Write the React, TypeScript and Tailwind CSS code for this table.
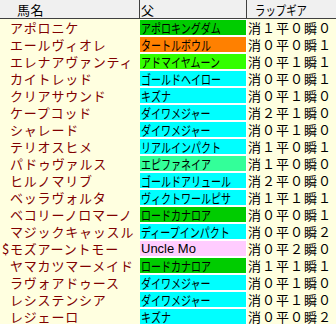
import React from "react";

type Row = { name: string; mark?: string; sire: string; color: string; gear: string; latin?: boolean };

const G1 = "bg-[#00cc00]";
const G2 = "bg-[#33ff00]";
const OR = "bg-[#ff8000]";
const CY = "bg-[#00ffff]";
const MT = "bg-[#33ff99]";
const PK = "bg-[#ffccff]";

const rows: Row[] = [
  { name: "アポロニケ", sire: "アポロキングダム", color: G1, gear: "消１平０瞬０" },
  { name: "エールヴィオレ", sire: "タートルボウル", color: OR, gear: "消０平０瞬１" },
  { name: "エレナアヴァンティ", sire: "アドマイヤムーン", color: G2, gear: "消０平１瞬１" },
  { name: "カイトレッド", sire: "ゴールドヘイロー", color: CY, gear: "消０平０瞬１" },
  { name: "クリアサウンド", sire: "キズナ", color: CY, gear: "消０平１瞬０" },
  { name: "ケープコッド", sire: "ダイワメジャー", color: CY, gear: "消２平１瞬０" },
  { name: "シャレード", sire: "ダイワメジャー", color: CY, gear: "消０平１瞬０" },
  { name: "テリオスヒメ", sire: "リアルインパクト", color: CY, gear: "消１平０瞬１" },
  { name: "パドゥヴァルス", sire: "エピファネイア", color: MT, gear: "消１平０瞬０" },
  { name: "ヒルノマリブ", sire: "ゴールドアリュール", color: CY, gear: "消２平０瞬０" },
  { name: "ベッラヴォルタ", sire: "ヴィクトワールピサ", color: CY, gear: "消１平１瞬１" },
  { name: "ベコリーノロマーノ", sire: "ロードカナロア", color: G1, gear: "消０平０瞬１" },
  { name: "マジックキャッスル", sire: "ディープインパクト", color: CY, gear: "消０平０瞬２" },
  { name: "モズアーントモー", mark: "$", sire: "Uncle Mo", color: PK, gear: "消０平２瞬０", latin: true },
  { name: "ヤマカツマーメイド", sire: "ロードカナロア", color: G1, gear: "消１平１瞬１" },
  { name: "ラヴォアドゥース", sire: "ダイワメジャー", color: CY, gear: "消０平１瞬０" },
  { name: "レシステンシア", sire: "ダイワメジャー", color: CY, gear: "消０平１瞬０" },
  { name: "レジェーロ", sire: "キズナ", color: CY, gear: "消０平０瞬２" },
];

const font = { fontFamily: '"Noto Sans CJK JP", "Noto Sans", sans-serif' };

export default function App() {
  return (
    <div className="w-[336px] h-[324px] overflow-hidden bg-white text-[13px] leading-none" style={font}>
      <div className="grid grid-cols-[140px_107px_89px] h-[19px] bg-[#f0f0f0] border-b border-[#404040]">
        <div className="flex items-center pl-[17px] border-r border-[#404040] text-black tracking-[0.5px]">馬名</div>
        <div className="flex items-center pl-[1px] border-r border-[#404040] text-black">父</div>
        <div className="flex items-center pl-[8px] text-black">
          <span className="inline-block origin-left scale-x-[0.8] whitespace-nowrap">ラップギア</span>
        </div>
      </div>
      {rows.map((r, i) => (
        <div key={i} className="grid grid-cols-[140px_106px_90px] h-[17px]">
          <div className="flex items-center bg-[#ffffe0] text-[#800000] tracking-[0.8px] whitespace-nowrap">
            <span className="w-[10px] pl-[2px] shrink-0">{r.mark ?? ""}</span>
            <span>{r.name}</span>
          </div>
          <div className="py-[1px] bg-white">
            <div className={`${r.color} h-full flex items-center pl-[1px] text-black`}>
              {r.latin ? (
                <span className="whitespace-nowrap" style={{ fontFamily: '"Liberation Sans", sans-serif' }}>{r.sire}</span>
              ) : (
                <span className="inline-block origin-left scale-x-[0.77] whitespace-nowrap">{r.sire}</span>
              )}
            </div>
          </div>
          <div className="bg-[#ffffe0] border-l border-white flex items-center pl-[1px] text-black tracking-[1px] whitespace-nowrap">
            {r.gear}
          </div>
        </div>
      ))}
    </div>
  );
}
